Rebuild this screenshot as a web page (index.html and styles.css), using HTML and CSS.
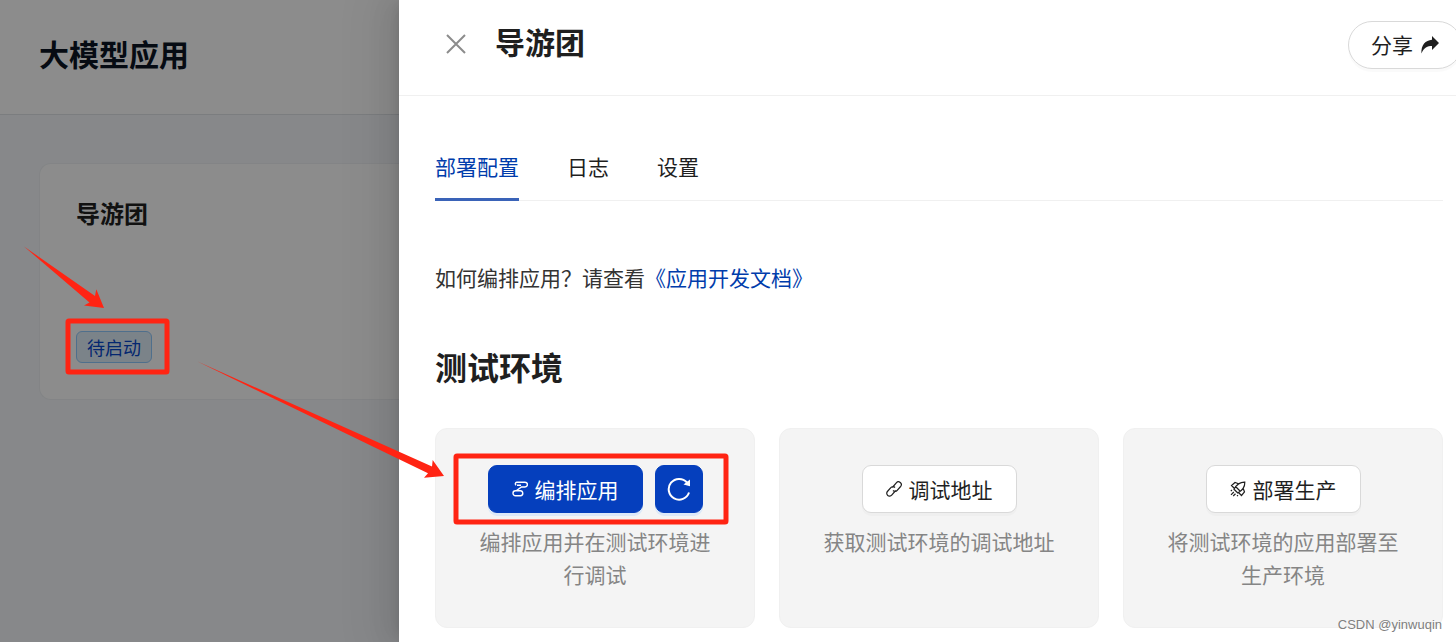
FILE: index.html
```html
<!DOCTYPE html>
<html lang="zh-CN">
<head>
    <meta charset="UTF-8">
    <meta name="viewport" content="width=device-width, initial-scale=1.0">
    <title>大模型应用</title>
    <link rel="stylesheet" href="styles.css">
</head>
<body>
    <div class="layout">
        <div class="page">
            <header class="page-header">
                <h1>大模型应用</h1>
            </header>
            <div class="page-content">
                <div class="app-card">
                    <h3>导游团</h3>
                    <span class="tag">待启动</span>
                </div>
            </div>
        </div>

        <main class="drawer">
            <header class="drawer-header">
                <button class="close" aria-label="关闭">
                    <svg width="20" height="20" viewBox="0 0 20 20"><path d="M1 1L19 19M19 1L1 19"/></svg>
                </button>
                <h2 class="drawer-title">导游团</h2>
                <button class="share">
                    分享
                    <svg width="18" height="18" viewBox="0 0 18 18"><path d="M11 0L18 7L11 14V10C6.500 10 3 11.500 .4 17.500C0 9 4.500 4.300 11 3.800Z"/></svg>
                </button>
            </header>

            <div class="drawer-body">
                <nav class="tabs">
                    <a href="#deploy" class="tab active">部署配置</a>
                    <a href="#log" class="tab">日志</a>
                    <a href="#settings" class="tab">设置</a>
                </nav>

                <p class="hint">如何编排应用？请查看<a href="#docs">《应用开发文档》</a></p>

                <h2 class="section-title">测试环境</h2>

                <div class="cards">
                    <section class="card">
                        <div class="actions">
                            <button class="btn primary">
                                <svg width="16" height="16" viewBox="0 0 16 16"><path d="M4.200 4.200A1.600 1.600 0 0 1 4.800 1.200H13A2.400 2.400 0 0 1 13 6H9.500L4.500 9.500M8 9.700A2.500 2.500 0 0 1 8.500 14.700H3.500A2.500 2.500 0 0 1 3.500 9.700H8M5 4.200H9"/></svg>
                                编排应用
                            </button>
                            <button class="btn primary icon-only" aria-label="刷新">
                                <svg class="reload" width="24" height="24" viewBox="0 0 24 24"><path d="M22 15.500A10.400 10.400 0 1 1 20 5.500"/><path class="fill" d="M23 2.500V9.200L16.500 7.600Z"/></svg>
                            </button>
                        </div>
                        <p>编排应用并在测试环境进行调试</p>
                    </section>

                    <section class="card">
                        <div class="actions">
                            <button class="btn">
                                <svg width="16" height="16" viewBox="0 0 16 16"><path d="M6.300 6.500L10.300 1.900A2.700 2.700 0 0 1 14.600 5.500L11.200 9.300A2.700 2.700 0 0 1 7 9.500M9.700 9.500L5.700 14.100A2.700 2.700 0 0 1 1.400 10.500L4.800 6.700A2.700 2.700 0 0 1 9 6.500"/></svg>
                                调试地址
                            </button>
                        </div>
                        <p>获取测试环境的调试地址</p>
                    </section>

                    <section class="card">
                        <div class="actions">
                            <button class="btn">
                                <svg width="16" height="16" viewBox="0 0 16 16"><path d="M14.800 1.200C10 1 7 3 4 8.300L7.800 12C13 9 15 6 14.800 1.200ZM8.500 2.800L5 1.500L1.500 4.500L4.500 7.500M13.200 7.500L14.500 11L11.500 14.500L8.500 11.500M5.500 5.500L10.500 10.500M2 9L.8 10.200M3.800 11L1 13.800M5.500 12.800L3.200 15M8 14.200L7 15.200"/></svg>
                                部署生产
                            </button>
                        </div>
                        <p>将测试环境的应用部署至生产环境</p>
                    </section>
                </div>
            </div>
        </main>

        <!-- red marks drawn over the page -->
        <svg class="marks" width="1456" height="642" viewBox="0 0 1456 642" aria-hidden="true">
            <rect x="68" y="321" width="99" height="51" rx="1"/>
            <rect x="456" y="456" width="270" height="66" rx="1"/>
            <path d="M24 246.500L95 296L96.300 289.300L104 308L84 305.500L89.500 302.500Z"/>
            <path d="M197 361.300L432 466.500L432.700 460L444 476L424 477.700L428 473.300Z"/>
        </svg>
        <span class="watermark">CSDN @yinwuqin</span>
    </div>
</body>
</html>
```
FILE: styles.css
```css
* {
    box-sizing: border-box;
}
body {
    margin: 0;
    font-family: "Noto Sans CJK SC", sans-serif;
    font-size: 21px;
    line-height: 33px;
    color: #1f1f1f;
}
h1, h2, h3, p {
    margin: 0;
}
a {
    color: #003cab;
    text-decoration: none;
}
button {
    font: inherit;
    color: inherit;
    cursor: pointer;
}
svg {
    flex: none;
}
.layout {
    position: relative;
    display: flex;
    min-height: 100vh;
    overflow: hidden;
}

/* page under the mask */
.page {
    position: relative;
    flex: 0 0 399px;
    background: #f6f8fb;
}
.page::after {
    content: "";
    position: absolute;
    inset: 0;
    background: rgba(0, 0, 0, 0.45);
}
.page-header {
    display: flex;
    align-items: center;
    height: 115px;
    padding: 0 39px 8px;
    background: #fff;
    border-bottom: 1px solid #e0e3e8;
}
.page-header h1 {
    font-size: 30px;
    color: #0b1524;
}
.page-content {
    padding: 48px 0 0 39px;
}
.app-card {
    display: flex;
    flex-direction: column;
    align-items: flex-start;
    justify-content: space-between;
    height: 237px;
    padding: 32px 36px 36px;
    background: #fff;
    border: 1px solid #eef1f4;
    border-right: 0;
    border-radius: 12px 0 0 12px;
}
.app-card h3 {
    font-size: 24px;
}
.tag {
    height: 32px;
    padding: 0 10px;
    font-size: 18px;
    line-height: 30px;
    color: #0848cc;
    background: #e0effa;
    border: 1px solid #91caff;
    border-radius: 6px;
}

/* drawer */
.drawer {
    position: relative;
    flex: 1;
    min-width: 0;
    background: #fff;
    box-shadow: -9px 0 24px rgba(0, 0, 0, 0.08),
        -5px 0 9px -6px rgba(0, 0, 0, 0.12),
        -14px 0 42px 12px rgba(0, 0, 0, 0.05);
}
.drawer-header {
    display: flex;
    align-items: center;
    height: 96px;
    padding: 0 0 6px 36px;
    border-bottom: 1px solid #f0f0f0;
}
.close {
    display: flex;
    padding: 8px 11px 10px;
    background: none;
    border: 0;
}
.close svg {
    fill: none;
    stroke: #8c8c8c;
    stroke-width: 2;
}
.drawer-title {
    margin-left: 18px;
    padding-bottom: 8px;
    font-size: 30px;
    line-height: 36px;
}
.share {
    display: flex;
    align-items: center;
    gap: 8px;
    height: 48px;
    margin: 0 -6px 0 auto;
    padding: 0 22px;
    background: #fff;
    border: 1px solid #d9d9d9;
    border-radius: 24px;
    box-shadow: 0 3px 0 rgba(0, 0, 0, 0.02);
}
.share svg {
    fill: #1f1f1f;
}
.drawer-body {
    padding: 54px 13px 14px 36px;
}
.tabs {
    display: flex;
    gap: 48px;
    border-bottom: 1px solid #f0f0f0;
}
.tab {
    margin-bottom: -1px;
    padding-bottom: 15px;
    border-bottom: 3px solid transparent;
    color: #1f1f1f;
}
.tab.active {
    color: #003cab;
    border-color: #3a63b8;
}
.hint {
    margin-top: 60px;
    color: #333;
}
.section-title {
    margin: 54px 0 44px;
    font-size: 32px;
    line-height: 36px;
}
.cards {
    display: grid;
    grid-template-columns: repeat(3, 1fr);
    gap: 24px;
}
.card {
    padding: 36px;
    text-align: center;
    background: #f4f4f4;
    border: 1px solid #f0f0f0;
    border-radius: 12px;
}
.card p {
    margin-top: 12px;
    color: #858585;
}
.actions {
    display: flex;
    justify-content: center;
    gap: 12px;
}
.btn {
    display: flex;
    align-items: center;
    justify-content: center;
    gap: 7px;
    height: 48px;
    padding: 0 23px;
    white-space: nowrap;
    background: #fff;
    border: 1px solid #d9d9d9;
    border-radius: 9px;
    box-shadow: 0 3px 0 rgba(0, 0, 0, 0.02);
}
.btn svg {
    fill: none;
    stroke: currentColor;
    stroke-width: 1.2;
}
.btn.primary {
    color: #fff;
    background: #053fbd;
    border-color: #053fbd;
    box-shadow: 0 3px 0 #dce9f8;
}
.btn.primary svg {
    stroke-width: 1.4;
}
.btn.primary .reload {
    stroke-width: 2;
}
.btn.icon-only {
    width: 48px;
    padding: 0;
}
.btn .fill {
    fill: currentColor;
    stroke: none;
}

.marks {
    position: absolute;
    top: 0;
    left: 0;
    fill: #ff2413;
    pointer-events: none;
}
.marks rect {
    fill: none;
    stroke: #ff2413;
    stroke-width: 5;
    stroke-linejoin: round;
}
.watermark {
    position: absolute;
    right: 14px;
    bottom: 8px;
    font-family: "Liberation Sans", Arial, sans-serif;
    font-size: 13px;
    line-height: 18px;
    color: #808080;
    text-shadow: 1px 1px 0 #fff;
}
```
